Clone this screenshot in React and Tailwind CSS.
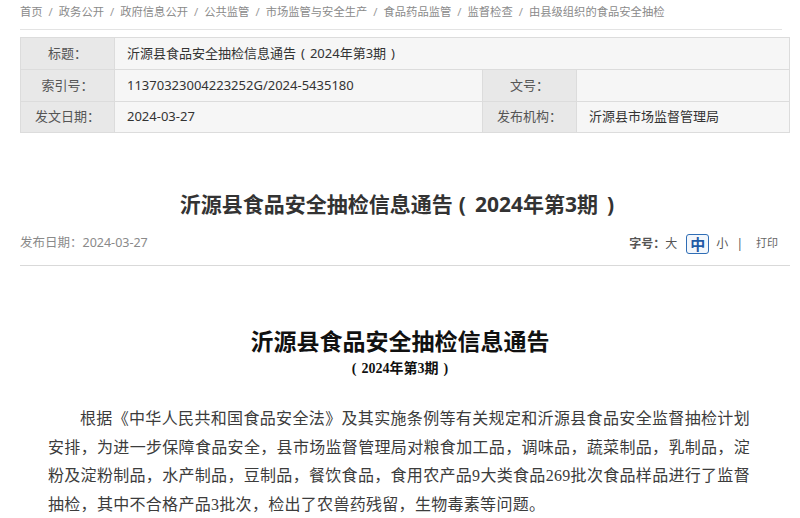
import React from 'react';

const crumbs = ['首页', '政务公开', '政府信息公开', '公共监管', '市场监管与安全生产', '食品药品监管', '监督检查', '由县级组织的食品安全抽检'];

const lines = [
  '根据《中华人民共和国食品安全法》及其实施条例等有关规定和沂源县食品安全监督抽检计划',
  '安排，为进一步保障食品安全，县市场监督管理局对粮食加工品，调味品，蔬菜制品，乳制品，淀',
  '粉及淀粉制品，水产制品，豆制品，餐饮食品，食用农产品9大类食品269批次食品样品进行了监督',
];

const App = () => {
  return (
    <div className="w-[800px] h-[518px] overflow-hidden bg-white font-['Noto_Sans','Noto_Sans_CJK_SC',sans-serif]">
      {/* breadcrumb */}
      <div className="mx-5 w-[762px] pt-[4px] pb-[9px] border-b border-[#e3e3e3] flex items-center text-[11.3px] leading-4 text-[#8a8a8a]">
        {crumbs.map((c, i) => (
          <React.Fragment key={c}>
            {i > 0 && <span className="px-[6px] text-[#9a9a9a]">/</span>}
            <span>{c}</span>
          </React.Fragment>
        ))}
      </div>

      {/* info table */}
      <table className="ml-5 mt-[7px] w-[770px] table-fixed border-collapse text-[13px] text-[#333]">
        <colgroup>
          <col className="w-[94px]" />
          <col className="w-[368px]" />
          <col className="w-[94px]" />
          <col />
        </colgroup>
        <tbody>
          <tr className="h-[32px]">
            <td className="border border-[#dcdcdc] bg-[#e8e8e8] text-center text-[#555]">标题：</td>
            <td colSpan={3} className="border border-[#dcdcdc] bg-[#f6f6f6] pl-3">沂源县食品安全抽检信息通告<span className="mx-[5px]">(</span>2024年第3期<span className="mx-[5px]">)</span></td>
          </tr>
          <tr className="h-[32px]">
            <td className="border border-[#dcdcdc] bg-[#e8e8e8] text-center text-[#555]">索引号：</td>
            <td className="border border-[#dcdcdc] bg-[#f6f6f6] pl-3">11370323004223252G/2024-5435180</td>
            <td className="border border-[#dcdcdc] bg-[#e8e8e8] text-center text-[#555]">文号：</td>
            <td className="border border-[#dcdcdc] bg-[#f6f6f6] pl-3"></td>
          </tr>
          <tr className="h-[31px]">
            <td className="border border-[#dcdcdc] bg-[#e8e8e8] text-center text-[#555]">发文日期：</td>
            <td className="border border-[#dcdcdc] bg-[#f6f6f6] pl-3">2024-03-27</td>
            <td className="border border-[#dcdcdc] bg-[#e8e8e8] text-center text-[#555]">发布机构：</td>
            <td className="border border-[#dcdcdc] bg-[#f6f6f6] pl-3">沂源县市场监督管理局</td>
          </tr>
        </tbody>
      </table>

      {/* title */}
      <h1 className="mt-[56px] text-center text-[21px] leading-[30px] font-bold text-[#333]">
        沂源县食品安全抽检信息通告<span className="ml-[6px] mr-[9px]">(</span>2024年第3期<span className="ml-[9px] mr-[6px]">)</span>
      </h1>

      {/* meta row */}
      <div className="mx-5 mt-[13px] w-[770px] pb-[10px] border-b border-[#d9d9d9] flex items-center justify-between h-[34px]">
        <span className="text-[12.5px] text-[#8a8a8a]">发布日期：2024-03-27</span>
        <div className="flex items-center text-[12px] mr-[12px]">
          <span className="font-bold text-[#555]">字号：</span>
          <span className="text-[#555]">大</span>
          <span className="ml-[9px] px-[3px] h-[20px] leading-[18px] border border-[#2f6db5] rounded-[3px] font-bold text-[15px] text-[#1f5aa6] bg-[#f3f7fc]">中</span>
          <span className="ml-[7px] text-[#555]">小</span>
          <span className="ml-[8px] text-[#555]">|</span>
          <span className="ml-[13px] text-[11px] text-[#666]">打印</span>
        </div>
      </div>

      {/* document body */}
      <div className="font-['Liberation_Serif','Noto_Sans_CJK_SC',serif]">
        <h2 className="mt-[61px] text-center text-[23px] leading-[32px] font-bold text-[#111]">
          沂源县食品安全抽检信息通告
        </h2>
        <div className="text-center text-[14px] leading-5 font-bold text-[#111]">
          <span className="mr-[5px]">(</span>2024年第3期<span className="ml-[5px]">)</span>
        </div>

        <div className="ml-[48px] mt-[26px] w-[702px] text-[16px] leading-[28.5px] text-[#3c3c3c] tracking-[0.3px]">
          {lines.map((l, i) => (
            <div key={i} className={`text-justify [text-align-last:justify] ${i === 0 ? 'pl-8' : ''}`}>{l}</div>
          ))}
          <div>抽检，其中不合格产品3批次，检出了农兽药残留，生物毒素等问题。</div>
        </div>
      </div>
    </div>
  );
};

export default App;
